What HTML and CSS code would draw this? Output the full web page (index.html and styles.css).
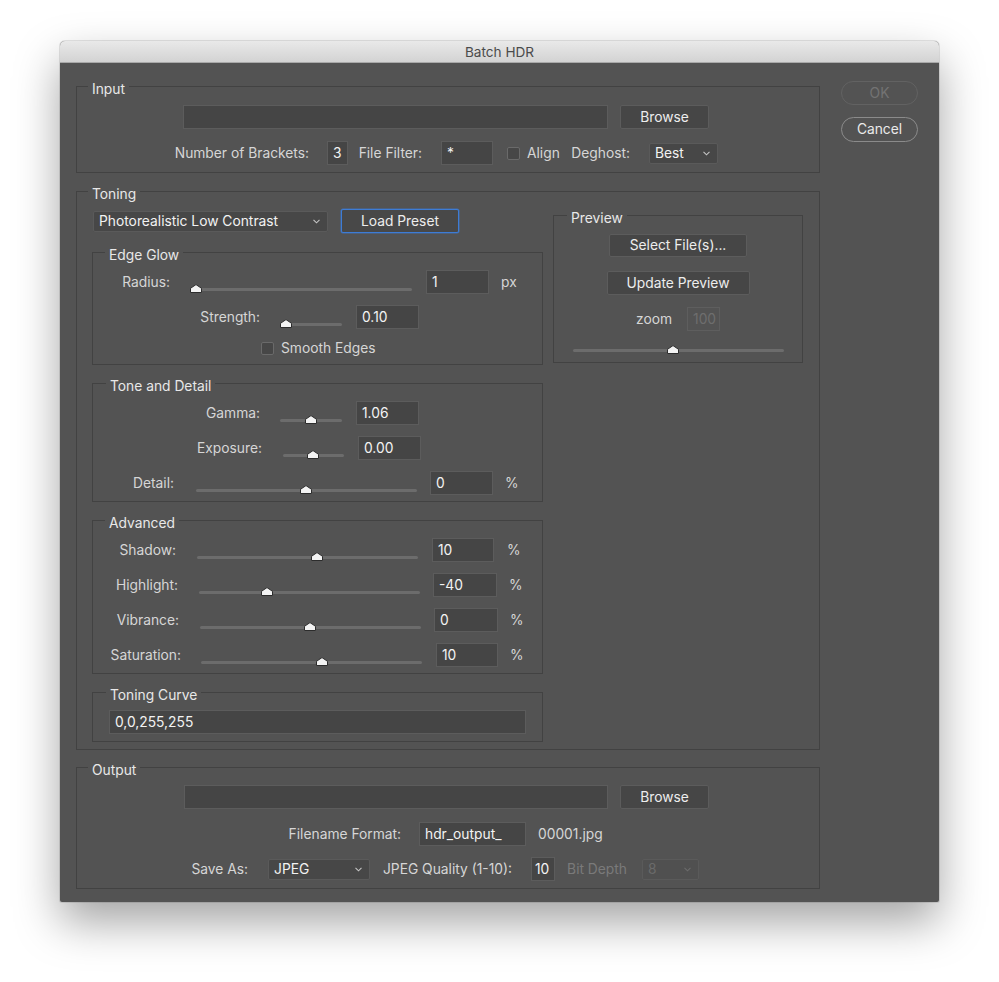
FILE: index.html
```html
<!DOCTYPE html>
<html>
<head>
<meta charset="utf-8">
<link rel="stylesheet" href="styles.css">
<title>Batch HDR</title>
</head>
<body>
<div class="stage">
  <div class="window">
    <div class="titlebar">Batch HDR</div>
    <div class="content">
      <div class="main">

        <div class="group g-input">
          <div class="legend">Input</div>
          <div class="row r-path">
            <div class="field f-path"></div>
            <div class="btn b-browse">Browse</div>
          </div>
          <div class="row r-in2">
            <div class="lbl l-brackets">Number of Brackets:</div>
            <div class="field f-brackets">3</div>
            <div class="lbl l-filter">File Filter:</div>
            <div class="field f-filter">*</div>
            <div class="check c-align"></div>
            <div class="lbl l-align">Align</div>
            <div class="lbl l-deghost">Deghost:</div>
            <div class="select s-deghost"><span>Best</span><svg class="chev" width="7" height="5" viewBox="0 0 7 5"><polyline points="0.5,0.8 3.5,3.8 6.5,0.8"/></svg></div>
          </div>
        </div>

        <div class="group g-toning">
          <div class="legend">Toning</div>
          <div class="tcols">
            <div class="tleft">
              <div class="row r-preset">
                <div class="select s-preset"><span>Photorealistic Low Contrast</span><svg class="chev" width="7" height="5" viewBox="0 0 7 5"><polyline points="0.5,0.8 3.5,3.8 6.5,0.8"/></svg></div>
                <div class="btn b-load">Load Preset</div>
              </div>

              <div class="group sub g-edge">
                <div class="legend">Edge Glow</div>
                <div class="row r-radius">
                  <div class="lbl">Radius:</div>
                  <div class="slider"><div class="track"></div><svg class="thumb" style="left:0px" width="12" height="9" viewBox="0 0 12 9"><path d="M0.5 8.5 V4.3 L6 0.6 L11.5 4.3 V8.5 Z"/></svg></div>
                  <div class="field">1</div>
                  <div class="unit">px</div>
                </div>
                <div class="row r-strength">
                  <div class="lbl">Strength:</div>
                  <div class="slider"><div class="track"></div><svg class="thumb" style="left:0px" width="12" height="9" viewBox="0 0 12 9"><path d="M0.5 8.5 V4.3 L6 0.6 L11.5 4.3 V8.5 Z"/></svg></div>
                  <div class="field">0.10</div>
                </div>
                <div class="row r-smooth">
                  <div class="check"></div>
                  <div class="lbl">Smooth Edges</div>
                </div>
              </div>

              <div class="group sub g-tone">
                <div class="legend">Tone and Detail</div>
                <div class="row r-gamma">
                  <div class="lbl">Gamma:</div>
                  <div class="slider"><div class="track"></div><svg class="thumb" style="left:25px" width="12" height="9" viewBox="0 0 12 9"><path d="M0.5 8.5 V4.3 L6 0.6 L11.5 4.3 V8.5 Z"/></svg></div>
                  <div class="field">1.06</div>
                </div>
                <div class="row r-exposure">
                  <div class="lbl">Exposure:</div>
                  <div class="slider"><div class="track"></div><svg class="thumb" style="left:24px" width="12" height="9" viewBox="0 0 12 9"><path d="M0.5 8.5 V4.3 L6 0.6 L11.5 4.3 V8.5 Z"/></svg></div>
                  <div class="field">0.00</div>
                </div>
                <div class="row r-detail">
                  <div class="lbl">Detail:</div>
                  <div class="slider"><div class="track"></div><svg class="thumb" style="left:104px" width="12" height="9" viewBox="0 0 12 9"><path d="M0.5 8.5 V4.3 L6 0.6 L11.5 4.3 V8.5 Z"/></svg></div>
                  <div class="field">0</div>
                  <div class="unit">%</div>
                </div>
              </div>

              <div class="group sub g-adv">
                <div class="legend">Advanced</div>
                <div class="row r-shadow">
                  <div class="lbl">Shadow:</div>
                  <div class="slider"><div class="track"></div><svg class="thumb" style="left:114px" width="12" height="9" viewBox="0 0 12 9"><path d="M0.5 8.5 V4.3 L6 0.6 L11.5 4.3 V8.5 Z"/></svg></div>
                  <div class="field">10</div>
                  <div class="unit">%</div>
                </div>
                <div class="row r-highlight">
                  <div class="lbl">Highlight:</div>
                  <div class="slider"><div class="track"></div><svg class="thumb" style="left:62px" width="12" height="9" viewBox="0 0 12 9"><path d="M0.5 8.5 V4.3 L6 0.6 L11.5 4.3 V8.5 Z"/></svg></div>
                  <div class="field">-40</div>
                  <div class="unit">%</div>
                </div>
                <div class="row r-vibrance">
                  <div class="lbl">Vibrance:</div>
                  <div class="slider"><div class="track"></div><svg class="thumb" style="left:104px" width="12" height="9" viewBox="0 0 12 9"><path d="M0.5 8.5 V4.3 L6 0.6 L11.5 4.3 V8.5 Z"/></svg></div>
                  <div class="field">0</div>
                  <div class="unit">%</div>
                </div>
                <div class="row r-saturation">
                  <div class="lbl">Saturation:</div>
                  <div class="slider"><div class="track"></div><svg class="thumb" style="left:115px" width="12" height="9" viewBox="0 0 12 9"><path d="M0.5 8.5 V4.3 L6 0.6 L11.5 4.3 V8.5 Z"/></svg></div>
                  <div class="field">10</div>
                  <div class="unit">%</div>
                </div>
              </div>

              <div class="group sub g-curve">
                <div class="legend">Toning Curve</div>
                <div class="row r-curve">
                  <div class="field f-curve">0,0,255,255</div>
                </div>
              </div>
            </div>

            <div class="group g-preview">
              <div class="legend">Preview</div>
              <div class="btn b-select">Select File(s)...</div>
              <div class="btn b-update">Update Preview</div>
              <div class="row r-zoom">
                <div class="lbl">zoom</div>
                <div class="field disabled f-zoom">100</div>
              </div>
              <div class="slider s-preview"><div class="track"></div><svg class="thumb" style="left:94px" width="12" height="9" viewBox="0 0 12 9"><path d="M0.5 8.5 V4.3 L6 0.6 L11.5 4.3 V8.5 Z"/></svg></div>
            </div>
          </div>
        </div>

        <div class="group g-output">
          <div class="legend">Output</div>
          <div class="row r-path r-opath">
            <div class="field f-path"></div>
            <div class="btn b-browse">Browse</div>
          </div>
          <div class="row r-out2">
            <div class="lbl l-format">Filename Format:</div>
            <div class="field f-format">hdr_output_</div>
            <div class="lbl l-suffix">00001.jpg</div>
          </div>
          <div class="row r-out3">
            <div class="lbl l-saveas">Save As:</div>
            <div class="select s-saveas"><span>JPEG</span><svg class="chev" width="7" height="5" viewBox="0 0 7 5"><polyline points="0.5,0.8 3.5,3.8 6.5,0.8"/></svg></div>
            <div class="lbl l-quality">JPEG Quality (1-10):</div>
            <div class="field f-quality">10</div>
            <div class="lbl l-bitdepth disabled">Bit Depth</div>
            <div class="select disabled s-bitdepth"><span>8</span><svg class="chev" width="7" height="5" viewBox="0 0 7 5"><polyline points="0.5,0.8 3.5,3.8 6.5,0.8"/></svg></div>
          </div>
        </div>

      </div>
      <div class="side">
        <div class="pill disabled">OK</div>
        <div class="pill p-cancel">Cancel</div>
      </div>
    </div>
  </div>
</div>
</body>
</html>
```

FILE: styles.css
```css
* { box-sizing: border-box; }
html, body { margin: 0; padding: 0; background: #ffffff; }
body {
  font-family: Inter, "Liberation Sans", sans-serif;
  font-size: 13.8px;
  color: #d6d6d6;
}
.stage { width: 999px; height: 982px; padding: 41px 0 0 60px; }
.window {
  width: 879px;
  height: 861px;
  background: #535353;
  border-radius: 5px 5px 2px 2px;
  box-shadow: 0 20px 45px rgba(0,0,0,0.36), 0 0 0 1px rgba(0,0,0,0.10);
  overflow: hidden;
}
.titlebar {
  height: 22px;
  line-height: 22px;
  background: linear-gradient(#e9e9e9, #d3d3d3);
  border-bottom: 1px solid #a9a9a9;
  text-align: center;
  color: #4b4b4b;
  font-size: 13.6px;
}
.content { display: flex; padding: 18px 0 0 16px; }
.main { width: 744px; padding-top: 5px; }
.side { width: 77px; margin-left: 21px; display: flex; flex-direction: column; }

/* groups */
.group { border: 1px solid #424242; }
.legend {
  width: max-content;
  height: 16px;
  line-height: 17px;
  margin: -6px 0 0 11px;
  padding: 0 4px;
  background: #535353;
  color: #e8e8e8;
}
.sub .legend { margin-left: 12px; }
.g-tone .legend { margin-left: 13px; }
.g-curve .legend { margin-left: 13px; }

.row { display: flex; align-items: center; height: 24px; }
.lbl { flex: none; white-space: nowrap; text-align: right; }
.unit { flex: none; margin-left: 12px; }

/* controls */
.field {
  flex: none;
  height: 24px;
  line-height: 22px;
  padding: 0 5px;
  background: #454545;
  border: 1px solid #5c5c5c;
  color: #f3f3f3;
  white-space: nowrap;
  overflow: hidden;
}
.field.disabled { background: #535353; border-color: #5e5e5e; color: #6e6e6e; }
.btn {
  flex: none;
  height: 24px;
  line-height: 22px;
  text-align: center;
  background: #464646;
  border: 1px solid #5c5c5c;
  border-radius: 2px;
  color: #ededed;
}
.select {
  flex: none;
  height: 21px;
  display: flex;
  align-items: center;
  justify-content: space-between;
  padding: 0 7px 0 5px;
  background: #474747;
  border: 1px solid #5a5a5a;
  border-radius: 2px;
  color: #f2f2f2;
}
.select .chev { fill: none; stroke: #c4c4c4; stroke-width: 1.1; }
.select.disabled { background: #505050; color: #6b6b6b; }
.select.disabled .chev { stroke: #6b6b6b; }
.lbl.disabled { color: #7a7a7a; }
.check {
  flex: none;
  width: 13px;
  height: 13px;
  background: #474747;
  border: 1px solid #6a6a6a;
  border-radius: 2px;
}
.slider { flex: none; position: relative; height: 24px; }
.track { margin-top: 18px; height: 3px; border-radius: 2px; background: #6c6c6c; }
.thumb { position: absolute; top: 14px; }
.thumb path { fill: #f3f3f3; stroke: #2c2c2c; stroke-width: 1; stroke-linejoin: round; }

/* side pills */
.pill {
  height: 24px;
  line-height: 22px;
  text-align: center;
  border: 1px solid #8b8b8b;
  border-radius: 13px;
  color: #eaeaea;
}
.pill.disabled { border-color: #626262; color: #737373; }
.p-cancel { margin-top: 12px; height: 25px; line-height: 23px; }

/* input group */
.g-input { padding-bottom: 7px; }
.r-path { margin-top: 8px; }
.r-path .f-path { margin-left: 106px; width: 425px; }
.r-path .b-browse { margin-left: 12px; width: 89px; }
.r-opath { margin-top: 7px; }
.r-opath .f-path { margin-left: 107px; width: 424px; }
.r-in2 { margin-top: 12px; }
.l-brackets { width: 232px; }
.f-brackets { margin-left: 18px; width: 21px; }
.l-filter { width: 74px; }
.f-filter { margin-left: 19px; width: 52px; }
.c-align { margin-left: 14px; }
.l-align { margin-left: 7px; width: 31px; text-align: left; }
.l-deghost { width: 72px; }
.s-deghost { margin-left: 19px; width: 69px; }

/* toning */
.g-toning { margin-top: 18px; padding-bottom: 7px; }
.tcols { display: flex; align-items: flex-start; }
.tleft { margin-left: 15px; width: 451px; padding-top: 7px; }
.s-preset { margin-left: 1px; width: 235px; }
.b-load {
  margin-left: 13px;
  width: 118px;
  border-color: #3d7cd6;
  box-shadow: 0 0 0 0.5px rgba(61,124,214,0.7);
  background: #484848;
}
.g-edge { margin-top: 19px; padding-bottom: 8px; }
.g-tone, .g-adv, .g-curve { margin-top: 18px; padding-bottom: 6px; }
.g-curve { padding-bottom: 7px; }

.sub .row { margin-top: 11px; }
.sub .legend + .row { margin-top: 7px; }
.sub .r-smooth { height: 16px; }
.r-smooth .check { margin-left: 168px; }
.r-smooth .lbl { margin-left: 7px; }
.sub .r-curve { margin-top: 6px; }
.f-curve { margin-left: 16px; width: 417px; }

.r-radius .lbl { width: 77px; }
.r-radius .slider { margin-left: 20px; width: 222px; }
.r-radius .field { margin-left: 14px; width: 63px; }
.r-strength .lbl { width: 167px; }
.r-strength .slider { margin-left: 20px; width: 62px; }
.r-strength .field { margin-left: 14px; width: 63px; }
.r-gamma .lbl { width: 167px; }
.r-gamma .slider { margin-left: 20px; width: 62px; }
.r-gamma .field { margin-left: 14px; width: 63px; }
.r-exposure .lbl { width: 169px; }
.r-exposure .slider { margin-left: 21px; width: 61px; }
.r-exposure .field { margin-left: 14px; width: 63px; }
.r-detail .lbl { width: 81px; }
.r-detail .slider { margin-left: 22px; width: 221px; }
.r-detail .field { margin-left: 13px; width: 63px; }
.r-shadow .lbl { width: 83px; }
.r-shadow .slider { margin-left: 21px; width: 221px; }
.r-shadow .field { margin-left: 14px; width: 62px; }
.r-shadow .unit { margin-left: 13px; }
.r-highlight .lbl { width: 85px; }
.r-highlight .slider { margin-left: 21px; width: 221px; }
.r-highlight .field { margin-left: 13px; width: 64px; }
.r-vibrance .lbl { width: 86px; }
.r-vibrance .slider { margin-left: 21px; width: 221px; }
.r-vibrance .field { margin-left: 13px; width: 64px; }
.r-saturation .lbl { width: 88px; }
.r-saturation .slider { margin-left: 20px; width: 221px; }
.r-saturation .field { margin-left: 14px; width: 62px; }

/* preview */
.g-preview {
  margin: 13px 0 0 10px;
  width: 250px;
  padding-bottom: 7px;
  display: flex;
  flex-direction: column;
  align-items: center;
}
.g-preview .legend { align-self: flex-start; margin-left: 13px; }
.b-select { margin-top: 8px; width: 138px; height: 23px; line-height: 21px; }
.b-update { margin-top: 14px; width: 143px; }
.r-zoom { margin-top: 12px; justify-content: center; }
.f-zoom { margin-left: 15px; width: 33px; }
.s-preview { width: 211px; }

/* output */
.g-output { margin-top: 17px; padding-bottom: 7px; }
.r-out2 { margin-top: 13px; }
.l-format { width: 324px; }
.f-format { margin-left: 18px; width: 107px; }
.l-suffix { margin-left: 12px; text-align: left; }
.r-out3 { margin-top: 11px; }
.l-saveas { width: 171px; }
.s-saveas { margin-left: 20px; width: 102px; }
.l-quality { width: 142px; }
.f-quality { margin-left: 19px; width: 24px; padding: 0 3px; }
.l-bitdepth { width: 72px; }
.s-bitdepth { margin-left: 15px; width: 57px; }
```
